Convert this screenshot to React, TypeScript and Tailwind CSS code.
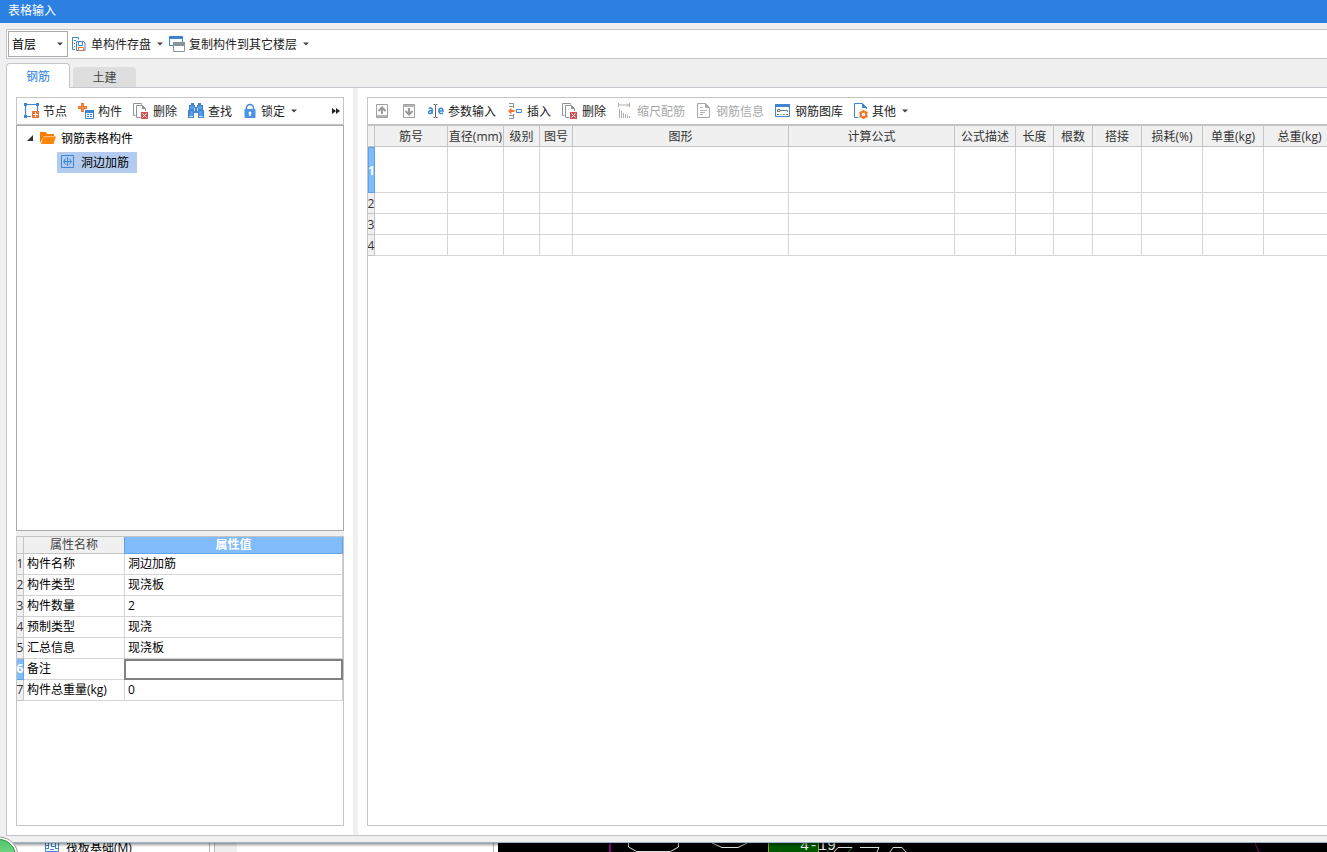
import { useState } from "react";
import type { ReactNode } from "react";

const Svg = ({ w = "w-4", vb = "0 0 16 16", children }: { w?: string; vb?: string; children: ReactNode }) => (
    <svg className={`${w} h-4 shrink-0`} viewBox={vb} fill="none" aria-hidden="true">
        {children}
    </svg>
);

const BLUE = "#3f86d2";
const GRAY = "#8a959b";
const ORANGE = "#f0762b";

const SaveIcon = () => (
    <Svg>
        <path d="M4 13.500H1.500v-12h6v2M3 4.500h2M3 7.500h1M3 10.500h1" stroke={BLUE} />
        <path d="M5.500 5.500h7l1.500 1.500v7.500H5.500z" fill="#fff" stroke={BLUE} />
        <path d="M7.500 6v3.500h4V6" stroke={BLUE} />
        <path d="M7 11.500h5.500v3H7.500v-3" stroke={ORANGE} />
    </Svg>
);

const CopyFloorIcon = () => (
    <Svg>
        <path d="M.5 .5h13v9H.5z" fill="#fff" stroke={BLUE} />
        <path d="M0 0h14v3H0z" fill={BLUE} />
        <path d="M4.500 6.500h11v9h-11z" fill="#fff" stroke={GRAY} />
        <path d="M4 6h12v4H4z" fill={GRAY} />
    </Svg>
);

const NodeIcon = () => (
    <Svg>
        <path d="M8 13.500H2.500v-12h12V8" stroke={BLUE} strokeWidth="1.200" />
        <path d="M1 0h3v3H1zM13 0h3v3h-3zM1 12h3v3H1z" fill={BLUE} />
        <path d="M9 8h7v7H9z" fill={ORANGE} />
        <path d="M12.500 9v5M10 11.500h5" stroke="#fff" />
    </Svg>
);

const ComponentIcon = () => (
    <Svg>
        <path d="M3 0h3v3h3v3H6v3H3V6H0V3h3z" fill={ORANGE} />
        <path d="M4 1v3H1v1h3v3h1V5h3V4H5V1z" fill="#f59152" />
        <path d="M7.500 7.500h8v8h-8z" fill="#fff" stroke={BLUE} />
        <path d="M7 7h9v3H7z" fill={BLUE} />
        <path d="M9 11.500h2M12 11.500h2M9 13.500h2M12 13.500h2" stroke={BLUE} />
    </Svg>
);

const DeleteIcon = () => (
    <Svg>
        <path d="M2.500 12.500h-2V.500h8v1" stroke={GRAY} />
        <path d="M7.500 14.500h-4v-12h6l3 3V8" stroke={GRAY} />
        <path d="M9 2v4h4z" fill={GRAY} />
        <path d="M8 9h7v7H8z" fill="#d25050" />
        <path d="M9.500 10.500l4 4M13.500 10.500l-4 4" stroke="#fff" />
    </Svg>
);

const FindIcon = () => (
    <Svg>
        <path d="M3 0h3v2h1v2h2V2h1V0h3v2h2v5h1v8h-6v-5H6v5H0V7h1V2h2z" fill={BLUE} />
        <path d="M2 3h4v3H2zM10 3h4v3h-4zM2 8h3v5H2zM11 8h3v5h-3z" fill="#5b9de6" />
        <path d="M6.500 5v3M9.500 5v3M1 13.500h4M11 13.500h4" stroke="#cfe2f8" />
    </Svg>
);

const LockIcon = () => (
    <Svg w="w-3.5" vb="0 0 14 16">
        <path d="M3.500 7V5a3.500 3.500 0 0 1 7 0v2" stroke={BLUE} strokeWidth="1.500" />
        <rect x="1.500" y="6" width="11" height="9" rx="1" fill="#4b93e4" />
        <path d="M7 8.500a1.500 1.500 0 0 1 .8 2.700V13H6.200v-1.800A1.500 1.500 0 0 1 7 8.500z" fill="#fff" />
    </Svg>
);

const UpIcon = () => (
    <Svg>
        <path d="M2.500 1.500h11v13h-11z" stroke="#a0a0a0" />
        <path d="M3 12h10v2H3z" fill="#b5b5b5" />
        <path d="M8 11V5M4.500 8L8 4.500 11.500 8" stroke="#999" strokeWidth="2" />
    </Svg>
);

const DownIcon = () => (
    <Svg>
        <path d="M2.500 1.500h11v13h-11z" stroke="#a0a0a0" />
        <path d="M3 2h10v2H3z" fill="#b5b5b5" />
        <path d="M8 5v6M4.500 8l3.500 3.500L11.500 8" stroke="#999" strokeWidth="2" />
    </Svg>
);

const ParamIcon = () => (
    <Svg>
        <path d="M.5 5.500c1.500-1 3.700-.8 3.700 1.200v4M4.200 7.500C2 7.500.5 7.900.5 9.300c0 1.800 3 1.600 3.700-.4" stroke={BLUE} strokeWidth="1.500" />
        <path d="M10.800 7.900h4.200c0-3.700-4.200-3.600-4.200 0 0 3 2.700 3.200 4 2" stroke={BLUE} strokeWidth="1.500" />
        <path d="M5.500 1.500H7l.5.500.5-.5h1.500M7.500 2v12M5.500 14.500H7l.5-.5.500.5h1.500" stroke="#666" />
    </Svg>
);

const InsertIcon = () => (
    <Svg>
        <path d="M2 .5h4.500v3H2M2 12.500h4.500v3H2M6.500 3v2M6.500 11v2" stroke={GRAY} />
        <path d="M1 8l3.500-3.500V7h3v2h-3v2.500z" fill={ORANGE} />
        <path d="M9.500 6.500h5v3h-5z" stroke={BLUE} />
    </Svg>
);

const ScaleIcon = () => (
    <Svg>
        <path d="M1.500 0v4M12.500 0v4M2 2h10M10 .5L11.500 2 10 3.500" stroke="#b0b0b0" />
        <path d="M2.500 6v9M4.500 8v7M6.500 10v5M8.500 11v4M10.500 12v3M12.500 13v2" stroke="#b0b0b0" />
    </Svg>
);

const InfoIcon = () => (
    <Svg>
        <path d="M1.500 .5h8l4 4v10h-12z" stroke="#a8a8a8" />
        <path d="M9.500 .5v4h4z" fill="#b0b0b0" stroke="#a8a8a8" />
        <path d="M4 4.500h3M4 7.500h7M4 9.500h5M4 11.500h3" stroke="#b0b0b0" />
    </Svg>
);

const LibraryIcon = () => (
    <Svg>
        <path d="M.5 1.500h14v12H.5z" fill="#fff" stroke={BLUE} />
        <path d="M0 1h15v3H0z" fill={BLUE} />
        <path d="M2.500 9V6.500H5v2H3M5 7.500h7.500V9" stroke="#6f7c84" />
        <path d="M2 11.500h2" stroke={BLUE} />
        <path d="M5 11.500h2" stroke="#e6b52e" />
        <path d="M8 11.500h2" stroke="#58b268" />
        <path d="M11 11.500h2" stroke="#e0524c" />
    </Svg>
);

const OtherIcon = () => (
    <Svg w="w-3.5" vb="0 0 14 16">
        <path d="M4.500 14.500h-4v-14h8l4 4V6" stroke={BLUE} />
        <path d="M8 0v5h5z" fill={BLUE} />
        <circle cx="9.500" cy="11.500" r="2.800" stroke={ORANGE} strokeWidth="2" />
        <path d="M9.500 7v2M9.500 14v2M5.500 9.200l1.500.9M12 12.900l1.500.9M5.500 13.800l1.500-.9M12 10.100l1.500-.9" stroke={ORANGE} strokeWidth="2" />
    </Svg>
);

const FolderIcon = () => (
    <Svg>
        <path d="M0 2h6l1 2h7v2H4L0 13z" fill="#f57c00" />
        <path d="M3.500 6.500H16L13.500 14H1z" fill="#ff860d" />
    </Svg>
);

const RebarIcon = () => (
    <Svg>
        <path d="M1.500 1.500h12v12h-12z" stroke={BLUE} />
        <path d="M7.500 3v9M3 7.500h9" stroke={BLUE} />
        <path d="M5.500 4.500C4 6 4 9 5.500 10.500M9.500 4.500C11 6 11 9 9.500 10.500" stroke={BLUE} />
    </Svg>
);

const Caret = () => (
    <svg className="w-1.5 h-1 shrink-0" viewBox="0 0 6 4" aria-hidden="true">
        <path d="M0 .5h6L3 3.500z" fill="#444" />
    </svg>
);

type ToolProps = {
    icon: ReactNode;
    label?: string;
    title?: string;
    caret?: boolean;
    disabled?: boolean;
    tight?: boolean;
};

const Tool = ({ icon, label, title, caret, disabled, tight }: ToolProps) => (
    <button
        type="button"
        disabled={disabled}
        aria-label={title}
        className={`${tight ? "px-[3px]" : "px-[5px]"} flex items-center gap-1 h-6 rounded-sm shrink-0 whitespace-nowrap text-[#222] hover:bg-gray-100 disabled:text-[#a8a8a8]`}
    >
        {icon}
        {label && <span>{label}</span>}
        {caret && <span className="pl-0.5"><Caret /></span>}
    </button>
);

const columns = [
    { name: "筋号", width: "w-[73px]" },
    { name: "直径(mm)", width: "w-[56px]" },
    { name: "级别", width: "w-[36px]" },
    { name: "图号", width: "w-[33px]" },
    { name: "图形", width: "w-[216px]" },
    { name: "计算公式", width: "w-[166px]" },
    { name: "公式描述", width: "w-[61px]" },
    { name: "长度", width: "w-[38px]" },
    { name: "根数", width: "w-[39px]" },
    { name: "搭接", width: "w-[49px]" },
    { name: "损耗(%)", width: "w-[61px]" },
    { name: "单重(kg)", width: "w-[61px]" },
    { name: "总重(kg)", width: "w-[72px]" },
];

const properties = [
    { name: "构件名称", value: "洞边加筋" },
    { name: "构件类型", value: "现浇板" },
    { name: "构件数量", value: "2" },
    { name: "预制类型", value: "现浇" },
    { name: "汇总信息", value: "现浇板" },
    { name: "备注", value: "" },
    { name: "构件总重量(kg)", value: "0" },
];

const RebarTable = () => (
    <table className="table-fixed w-[968px] border-separate border-spacing-0">
        <thead>
            <tr className="h-[21px] bg-[#f0f0f0] text-[#333]">
                <th className="w-[7px] p-0 border-r border-b border-[#c4c4c4]"></th>
                {columns.map((c) => (
                    <th key={c.name} className={`${c.width} p-0 border-r border-b border-[#c4c4c4] font-normal whitespace-nowrap`}>
                        {c.name}
                    </th>
                ))}
            </tr>
        </thead>
        <tbody>
            {[1, 2, 3, 4].map((n) => (
                <tr key={n} className={n === 1 ? "h-[46px]" : "h-[21px]"}>
                    <th
                        className={
                            n === 1
                                ? "p-0 border border-[#5fa3ec] bg-[#80bbfa] text-white font-bold"
                                : "p-0 border-r border-b border-[#c4c4c4] bg-[#f0f0f0] text-[#333] font-normal"
                        }
                    >
                        <span className="flex justify-center">{n}</span>
                    </th>
                    {columns.map((c) => (
                        <td key={c.name} className="p-0 border-r border-b border-[#d4d4d4]"></td>
                    ))}
                </tr>
            ))}
        </tbody>
    </table>
);

const PropertyTable = () => {
    const [note, setNote] = useState("");

    return (
        <table className="table-fixed w-full border-separate border-spacing-0 text-left">
            <thead>
                <tr className="h-[17px] text-center leading-4">
                    <th className="w-[7px] p-0 border-r border-b border-[#c4c4c4] bg-[#f0f0f0]"></th>
                    <th className="w-[100px] p-0 border-b border-[#c4c4c4] bg-[#f0f0f0] text-[#444] font-normal">属性名称</th>
                    <th className="p-0 border border-t-0 border-[#5fa3ec] bg-[#80bbfa] text-white font-bold">属性值</th>
                </tr>
            </thead>
            <tbody>
                {properties.map((p, i) => (
                    <tr key={p.name} className="h-[21px]">
                        <th
                            className={
                                p.name === "备注"
                                    ? "p-0 border-r border-b border-[#5fa3ec] bg-[#80bbfa] text-white font-bold"
                                    : "p-0 border-r border-b border-[#c4c4c4] bg-[#f0f0f0] text-[#333] font-normal"
                            }
                        >
                            <span className="flex justify-center">{i + 1}</span>
                        </th>
                        <td className="p-0 pl-[3px] border-b border-[#d4d4d4]">{p.name}</td>
                        {p.name === "备注" ? (
                            <td className="p-0">
                                <input
                                    type="text"
                                    aria-label="备注"
                                    value={note}
                                    onChange={(e) => setNote(e.target.value)}
                                    className="block w-full h-[21px] px-0.5 border-2 border-[#808080] outline-none"
                                />
                            </td>
                        ) : (
                            <td className="p-0 pl-[3px] border-x border-b border-[#d4d4d4]">{p.value}</td>
                        )}
                    </tr>
                ))}
            </tbody>
        </table>
    );
};

const Backdrop = () => (
    <div className="relative flex h-[9px] shrink-0 bg-white">
        <div className="flex items-center gap-1.5 w-[210px] h-full pl-11 overflow-hidden border-r border-[#b8b8b8] whitespace-nowrap">
            <Svg>
                <path d="M1.500 2.500h13v9h-13zM4.500 3v5M7.500 3v4M11.500 3v5M2 5.500h3M7 6.500h5M2 8.500h3M6 9.500h4M11 8.500h3" stroke={BLUE} />
            </Svg>
            筏板基础(M)
        </div>
        <div className="w-[5px] border-r border-[#b8b8b8]"></div>
        <div className="w-[22px] bg-[#f0f0f0]"></div>
        <div className="w-[257px] border-r border-[#b8b8b8]"></div>
        <div className="w-1"></div>
        <div className="flex-1 bg-black overflow-hidden">
            <svg className="w-full h-[9px]" viewBox="498 843 829 9" preserveAspectRatio="xMinYMin slice" fill="none">
                <path d="M610 843v9" stroke="#8b008b" strokeWidth="2" />
                <path d="M628.500 843v4l8 4.500h34l8-4.500v-4M712 843l10 4.500h16l9-4.500" stroke="#ddd" />
                <path d="M768 843h51v9h-51z" fill="#005800" />
                <path d="M768.500 843v9M818.500 843v9" stroke="#a8a800" />
                <path d="M827 852l8-9M848 852l5-5" stroke="#008000" />
                <path d="M834 852l4-4.500h14M860 847.500h19l-2 4.500M890 852l3-4.500h9l4 4.500" stroke="#ddd" />
                <path d="M1255 843l4 9" stroke="#8b008b" />
                <text x="800" y="850" fill="#e8e8e8" fontSize="15" fontFamily="Liberation Mono, monospace">4-19</text>
            </svg>
        </div>
        <div className="absolute inset-x-0 top-0 h-1 bg-linear-to-b from-black/40 to-transparent"></div>
        <svg className="absolute left-0 bottom-0 w-5 h-4" viewBox="0 0 20 16" aria-hidden="true">
            <defs>
                <linearGradient id="ball" x1="0" y1="0" x2="0" y2="1">
                    <stop offset="0" stopColor="#4fc56a" />
                    <stop offset="1" stopColor="#a5e8a0" />
                </linearGradient>
            </defs>
            <circle cx="-1" cy="20" r="19" fill="#fff" stroke="#999" />
            <circle cx="-1" cy="20" r="16.500" fill="url(#ball)" stroke="#2f8a45" />
        </svg>
    </div>
);

const App = () => {
    const [tab, setTab] = useState("钢筋");

    return (
        <div className="flex flex-col h-screen overflow-hidden bg-[#f0f0f0] text-xs leading-[17px] text-black font-['Open_Sans','Noto_Sans_CJK_SC',sans-serif]">
            <header className="h-[23px] shrink-0 pl-2 bg-[#2b80e2] text-white leading-[22px]">表格输入</header>

            {/* Floor toolbar */}
            <div className="flex items-center h-[30px] shrink-0 mt-1.5 ml-1.5 pl-px border border-r-0 border-[#c3c5cb] bg-white">
                <div className="grid items-center shrink-0 w-[60px]">
                    <select aria-label="楼层" className="col-start-1 row-start-1 appearance-none h-[26px] w-full pl-[3px] border border-[#a9a9a9] bg-white outline-none">
                        <option>首层</option>
                    </select>
                    <span className="col-start-1 row-start-1 justify-self-end flex pr-[5px] pointer-events-none"><Caret /></span>
                </div>
                <div className="flex">
                    <Tool icon={<SaveIcon />} label="单构件存盘" caret tight />
                    <Tool icon={<CopyFloorIcon />} label="复制构件到其它楼层" caret tight />
                </div>
            </div>

            {/* Tabs */}
            <div role="tablist" className="relative flex items-end gap-[3px] shrink-0 h-[25px] mt-1 ml-1.5 -mb-px">
                {["钢筋", "土建"].map((name) => (
                    <button
                        key={name}
                        type="button"
                        role="tab"
                        aria-selected={tab === name}
                        onClick={() => setTab(name)}
                        className={
                            tab === name
                                ? "w-16 h-[25px] border border-b-0 border-[#c3c5cb] rounded-t-sm bg-white text-[#2b80e2]"
                                : "w-[63px] h-5 mb-px rounded-t-sm bg-[#dedede] text-[#444]"
                        }
                    >
                        {name}
                    </button>
                ))}
            </div>

            <main className="flex flex-1 min-h-0 ml-1.5 mb-1.5 border border-r-0 border-[#c3c5cb] bg-white">
                <section className="flex flex-col w-[346px] shrink-0 p-[9px]">
                    <div className="flex items-center h-7 shrink-0 gap-px pl-px border border-[#c4c4c4]">
                        <Tool icon={<NodeIcon />} label="节点" />
                        <Tool icon={<ComponentIcon />} label="构件" />
                        <Tool icon={<DeleteIcon />} label="删除" />
                        <Tool icon={<FindIcon />} label="查找" />
                        <Tool icon={<LockIcon />} label="锁定" caret />
                        <button type="button" aria-label="更多" className="ml-auto pr-[3px]">
                            <svg className="w-2 h-1.5" viewBox="0 0 8 6" aria-hidden="true">
                                <path d="M0 0l4 3-4 3zM4 0l4 3-4 3z" fill="#222" />
                            </svg>
                        </button>
                    </div>
                    <div className="flex-[7_1_0] min-h-0 border border-[#aaa]">
                        <div className="flex items-center h-6 pl-2.5">
                            <svg className="w-1.5 h-1.5 mr-[7px]" viewBox="0 0 6 6" aria-hidden="true">
                                <path d="M6 0v6H0z" fill="#333" />
                            </svg>
                            <FolderIcon />
                            <span className="pl-[5px]">钢筋表格构件</span>
                        </div>
                        <div className="flex items-center h-6 pl-10">
                            <button type="button" className="flex items-center gap-[5px] h-[21px] pl-[3px] pr-2 bg-[#b3cbee]">
                                <RebarIcon />
                                洞边加筋
                            </button>
                        </div>
                    </div>
                    <div className="h-[5px] shrink-0 bg-[#f0f0f0]"></div>
                    <div className="flex-[5_1_0] min-h-0 border border-[#c4c4c4]">
                        <PropertyTable />
                    </div>
                </section>

                <div className="w-[5px] shrink-0 bg-[#f0f0f0]"></div>

                <section className="flex flex-col flex-1 min-w-0 py-[9px] pl-[9px]">
                    <div className="flex items-center h-7 shrink-0 gap-px pl-px border border-r-0 border-[#c4c4c4]">
                        <Tool icon={<UpIcon />} title="上移" />
                        <Tool icon={<DownIcon />} title="下移" />
                        <Tool icon={<ParamIcon />} label="参数输入" />
                        <Tool icon={<InsertIcon />} label="插入" />
                        <Tool icon={<DeleteIcon />} label="删除" />
                        <Tool icon={<ScaleIcon />} label="缩尺配筋" disabled />
                        <Tool icon={<InfoIcon />} label="钢筋信息" disabled />
                        <Tool icon={<LibraryIcon />} label="钢筋图库" />
                        <Tool icon={<OtherIcon />} label="其他" caret />
                    </div>
                    <div className="flex-1 min-h-0 overflow-hidden border border-r-0 border-[#c4c4c4]">
                        <RebarTable />
                    </div>
                </section>
            </main>

            <div className="h-px shrink-0 bg-[#9db4c4]"></div>
            <Backdrop />
        </div>
    );
};

export default App;
